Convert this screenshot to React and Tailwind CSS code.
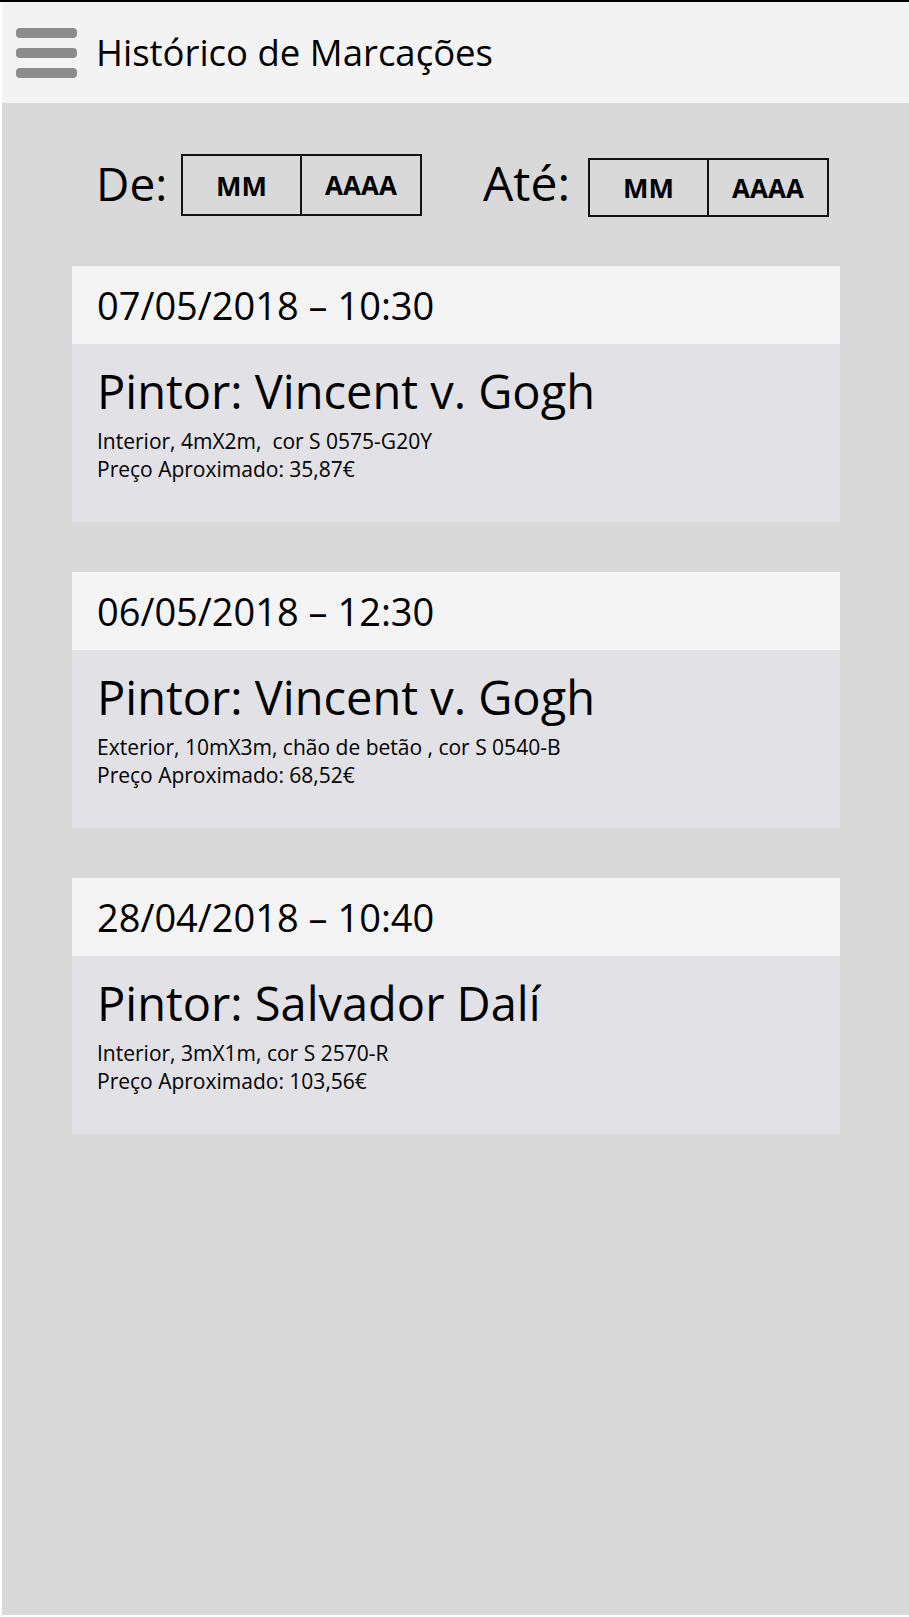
import React from 'react';

const font = { fontFamily: '"Open Sans", "Noto Sans", sans-serif' };

const bookings = [
    { id: 1, when: '07/05/2018 – 10:30', painter: 'Vincent v. Gogh', details: 'Interior, 4mX2m,  cor S 0575-G20Y', price: '35,87€' },
    { id: 2, when: '06/05/2018 – 12:30', painter: 'Vincent v. Gogh', details: 'Exterior, 10mX3m, chão de betão , cor S 0540-B', price: '68,52€' },
    { id: 3, when: '28/04/2018 – 10:40', painter: 'Salvador Dalí', details: 'Interior, 3mX1m, cor S 2570-R', price: '103,56€' },
];

const DateBox = ({ className }) => (
    <div className={`flex border-2 border-[#111] ${className}`}>
        <div className="w-[119px] flex items-center justify-center text-[27px] font-bold leading-none border-r-2 border-[#111]">MM</div>
        <div className="flex-1 flex items-center justify-center text-[26px] font-bold leading-none">AAAA</div>
    </div>
);

const BookingCard = ({ booking }) => (
    <div className="w-[768px]">
        {/* Date header */}
        <div className="h-[78px] bg-[#f4f4f4] flex items-center pl-[25px]">
            <span className="text-[38px] leading-none">{booking.when}</span>
        </div>
        {/* Details */}
        <div className="h-[178px] bg-[#e2e1e6] pl-[25px] pt-[24px]">
            <div className="text-[47px] leading-none">Pintor: {booking.painter}</div>
            <div className="mt-[12px] text-[21px] leading-[28px] whitespace-pre">
                <div>{booking.details}</div>
                <div>Preço Aproximado: {booking.price}</div>
            </div>
        </div>
    </div>
);

export default function App() {
    return (
        <div className="h-[1617px] bg-white flex flex-col text-black" style={font}>
            <div className="h-[2px] bg-black shrink-0" />
            <div className="flex-1 ml-[2px] mb-[2px] bg-[#d9d9d9] flex flex-col">
                {/* Top bar */}
                <header className="h-[101px] bg-[#f3f3f3] flex items-center pl-[14px] shrink-0">
                    <div className="flex flex-col gap-[10px]">
                        <div className="w-[61px] h-[10px] rounded-[4px] bg-[#8c8c8c]" />
                        <div className="w-[61px] h-[10px] rounded-[4px] bg-[#8c8c8c]" />
                        <div className="w-[61px] h-[10px] rounded-[4px] bg-[#8c8c8c]" />
                    </div>
                    <h1 className="ml-[19px] text-[36.5px] font-normal leading-none">Histórico de Marcações</h1>
                </header>

                {/* Period filter */}
                <div className="flex items-start pl-[94px] pt-[51px]">
                    <span className="w-[85px] mt-[6px] text-[46px] leading-none">De:</span>
                    <DateBox className="w-[241px] h-[62px]" />
                    <span className="ml-[61px] w-[105px] mt-[5px] text-[48px] leading-none">Até:</span>
                    <DateBox className="w-[241px] h-[59px] mt-[4px]" />
                </div>

                {/* Bookings */}
                <div className="ml-[70px] mt-[49px] flex flex-col gap-[50px]">
                    {bookings.map(b => (
                        <BookingCard key={b.id} booking={b} />
                    ))}
                </div>
            </div>
        </div>
    );
}
